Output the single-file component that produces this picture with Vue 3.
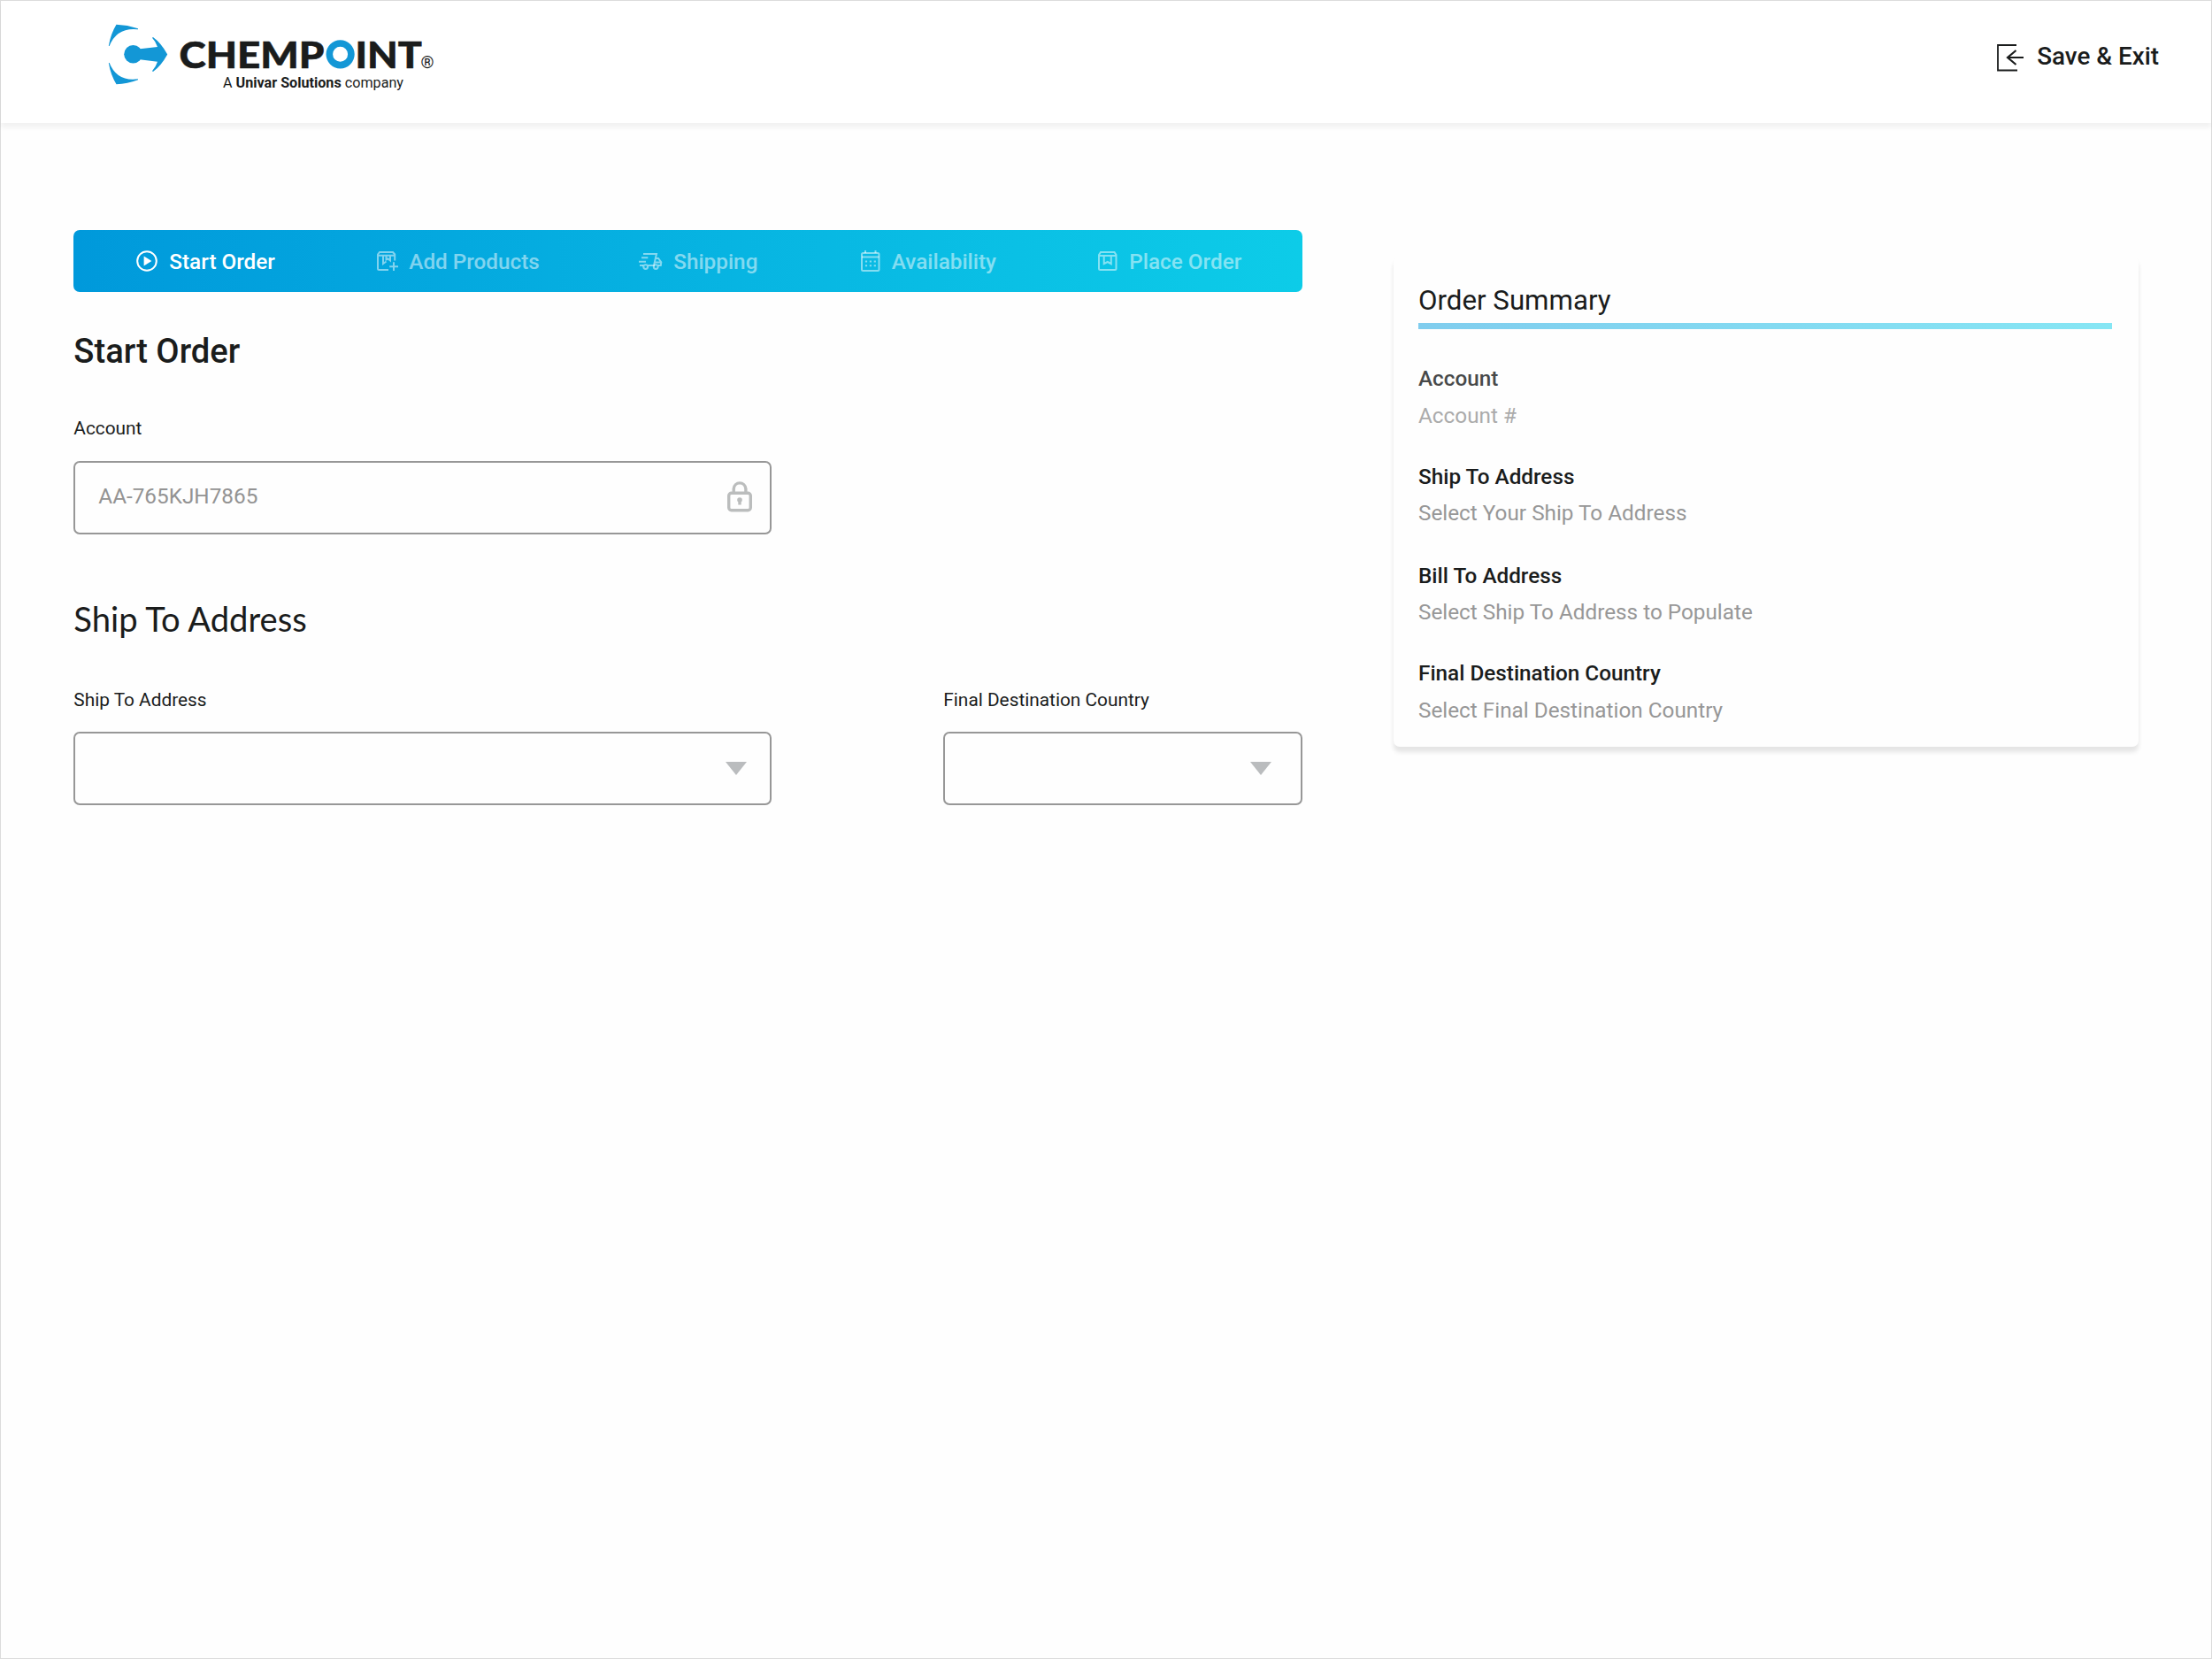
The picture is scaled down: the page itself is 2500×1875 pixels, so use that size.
<template>
  <div class="order-page">
    <header class="header">
      <svg class="logo" viewBox="120 20 380 90" role="img" aria-label="ChemPoint">
        <g fill="#1397d6">
          <path d="M131.5 27.8Q144 28.3 156 32.2L156 33.2Q132 30.5 123.6 52L122.8 52Q125 38.5 131.5 27.8Z" />
          <path d="M131.5 95.2Q144 94.7 156 90.3L156 89.3Q132 92.5 123.6 71L122.8 71Q125 84.5 131.5 95.2Z" />
          <circle cx="150.5" cy="61.3" r="10.3" />
          <path d="M156 55.6L178 53Q176 47 172 42.8L173 42Q182 48.5 189.2 61.4Q182 74.5 173 81L172 80.2Q176 76 178 69.8L156 67Z" />
        </g>
        <text class="logo-name" x="202.5" y="76.7" textLength="164" lengthAdjust="spacingAndGlyphs">CHEMP</text>
        <circle cx="384.6" cy="61.3" r="12.3" fill="none" stroke="#1397d6" stroke-width="7.6" />
        <text class="logo-name" x="401.5" y="76.7" textLength="75.5" lengthAdjust="spacingAndGlyphs">INT</text>
        <text class="logo-mark" x="475.5" y="76.5" textLength="15" lengthAdjust="spacingAndGlyphs">®</text>
        <text class="logo-sub" x="252" y="99" textLength="204" lengthAdjust="spacingAndGlyphs">A <tspan class="logo-bold">Univar Solutions</tspan> company</text>
      </svg>
      <button class="btn-exit">
        <svg class="exit-icon" viewBox="0 0 31 31">
          <path d="M22 1H1V29.5H23" stroke-width="1.8" />
          <path d="M30 15H12M21.5 7L12 15L21.5 23" stroke-width="2.2" />
        </svg>
        <span>Save &amp; Exit</span>
      </button>
    </header>

    <main class="content">
      <section class="order-form">
        <nav class="steps">
          <div v-for="step in steps" :key="step.id" class="step" :class="[step.id, { active: step.id === currentStep }]">
            <svg v-if="step.id === 'start'" class="icon-start" viewBox="0 0 24 24">
              <circle cx="12" cy="12" r="10.8" />
              <path class="solid" d="M8.6 6.4L17.4 11.9L8.6 17.5Z" />
            </svg>
            <svg v-else-if="step.id === 'products'" class="icon-products" viewBox="0 0 24 22">
              <path d="M20.2 10.5V3.5L18 1H3L1 3.5V19.5Q1 21 2.5 21H13M1 4.8H20M7 5V14L10.5 11.5M10.5 5V9.5L12.500 8.500L15 10.5V5M19 12.2V22M14.2 17.2H24" />
            </svg>
            <svg v-else-if="step.id === 'shipping'" class="icon-shipping" viewBox="0 0 27 19">
              <path d="M5 1H20L17 14H10.5M3 5.3H10.300M0 9.7H8M1 14H5M19 6H22L25.3 10.300L24.8 14H22M18 10.5H25" />
              <circle cx="7.7" cy="15.6" r="2.4" />
              <circle cx="19.2" cy="15.6" r="2.4" />
            </svg>
            <svg v-else-if="step.id === 'availability'" class="icon-availability" viewBox="0 0 22 24">
              <rect x="1" y="3" width="19.5" height="20" rx="1.5" />
              <path d="M1 7.5H20.5M5 0V3M16.5 0V3" />
              <path stroke-dasharray="2.2 2.7" d="M4.900 12.6H17M4.9 17.3H17" />
            </svg>
            <svg v-else class="icon-place" viewBox="0 0 22 22">
              <path d="M1 4L3 1H18.5L20.5 4V19.5Q20.5 21 19 21H2.5Q1 21 1 19.5ZM1 5H20.5M6.7 5V14.2L10.8 12L14.8 14.2V5" />
            </svg>
            <span>{{ step.name }}</span>
          </div>
        </nav>

        <h1>Start Order</h1>

        <div class="form-group account">
          <label>Account</label>
          <div class="field">
            <span>{{ accountNumber }}</span>
            <svg class="lock-icon" viewBox="0 0 28 36">
              <rect x="1.7" y="14.2" width="24.6" height="19.5" rx="3" />
              <path d="M7.2 14V9.5A6.9 7.5 0 0 1 20.9 9.5V14" />
              <circle class="solid" cx="14" cy="22" r="2.8" />
              <path d="M14 22V27.5" />
            </svg>
          </div>
        </div>

        <h2>Ship To Address</h2>

        <div class="form-row">
          <div class="form-group ship-to">
            <label>Ship To Address</label>
            <div class="field select">
              <svg class="arrow" viewBox="0 0 24 15"><path d="M0 0H24L12 15Z" /></svg>
            </div>
          </div>
          <div class="form-group country">
            <label>Final Destination Country</label>
            <div class="field select">
              <svg class="arrow" viewBox="0 0 24 15"><path d="M0 0H24L12 15Z" /></svg>
            </div>
          </div>
        </div>
      </section>

      <aside class="summary">
        <h3>Order Summary</h3>
        <div v-for="item in summary" :key="item.title" class="summary-item" :class="{ muted: item.muted }">
          <strong>{{ item.title }}</strong>
          <span>{{ item.value }}</span>
        </div>
      </aside>
    </main>
  </div>
</template>

<script setup>
import { ref } from 'vue'

const currentStep = ref('start')
const accountNumber = ref('AA-765KJH7865')

const steps = [
  { id: 'start', name: 'Start Order' },
  { id: 'products', name: 'Add Products' },
  { id: 'shipping', name: 'Shipping' },
  { id: 'availability', name: 'Availability' },
  { id: 'place', name: 'Place Order' }
]

const summary = ref([
  { title: 'Account', value: 'Account #', muted: true },
  { title: 'Ship To Address', value: 'Select Your Ship To Address' },
  { title: 'Bill To Address', value: 'Select Ship To Address to Populate' },
  { title: 'Final Destination Country', value: 'Select Final Destination Country' }
])
</script>

<style>
body {
  background: #fefefe;
}
</style>

<style scoped>
.order-page {
  box-sizing: border-box;
  width: 2500px;
  height: 1875px;
  border: 1px solid #dcdcdc;
  background: #fefefe;
  font-family: Roboto, sans-serif;
  color: #1a1c1c;
}

.order-page * {
  box-sizing: border-box;
}

.header {
  display: flex;
  justify-content: space-between;
  align-items: flex-start;
  height: 138px;
  padding: 19px 59px 0 119px;
  background: #fff;
  box-shadow: 0 5.5px 5.5px rgba(0, 0, 0, 0.05);
}

.logo {
  width: 380px;
  height: 90px;
}

.logo-name {
  font-family: Lato, sans-serif;
  font-size: 42.5px;
  font-weight: 900;
  fill: #1a1c1c;
  stroke: #1a1c1c;
  stroke-width: 0.6;
}

.logo-mark {
  font-size: 19px;
  fill: #1a1c1c;
}

.logo-sub {
  font-size: 16.5px;
  fill: #1a1c1c;
}

.logo-bold {
  font-weight: 700;
}

.btn-exit {
  display: flex;
  align-items: center;
  gap: 14px;
  margin-top: 26px;
  padding: 0;
  border: none;
  background: none;
  color: #1a1c1c;
  font-family: inherit;
  font-size: 27.8px;
  font-weight: 500;
  line-height: 32px;
}

.exit-icon {
  width: 31px;
  height: 31px;
  margin-top: 4px;
  fill: none;
  stroke: #1a1c1c;
}

.content {
  display: flex;
  align-items: flex-start;
  justify-content: space-between;
  padding: 121px 82px 0 82.3px;
}

.order-form {
  width: 1389px;
}

.steps {
  display: flex;
  justify-content: space-between;
  align-items: center;
  height: 70px;
  padding: 0 69px 0 71px;
  border-radius: 7px;
  background: linear-gradient(90deg, #0099db 0%, #0dcce8 100%);
}

.step {
  display: flex;
  align-items: center;
  gap: 13px;
  color: rgba(255, 255, 255, 0.5);
  font-size: 24.3px;
  font-weight: 500;
  line-height: 30px;
}

.step span {
  padding-top: 1px;
}

.step.active {
  color: #fff;
}

.step.products,
.step.shipping {
  gap: 12px;
}

.step.shipping {
  margin: 0 1px 0 -3px;
}

.step svg {
  fill: none;
  stroke: currentColor;
  stroke-width: 2;
}

.step svg .solid {
  fill: currentColor;
  stroke: none;
}

.icon-start { width: 24px; height: 24px; }
.icon-products { width: 24px; height: 22px; }
.icon-shipping { width: 27px; height: 19px; }
.icon-availability { width: 22px; height: 24px; }
.icon-place { width: 22px; height: 22px; }

h1 {
  margin: 44px 0 0;
  font-size: 38.2px;
  font-weight: 500;
  line-height: 46px;
}

h2 {
  margin: 72px 0 0;
  font-family: Lato, sans-serif;
  font-size: 38.2px;
  font-weight: 400;
  line-height: 46px;
}

.form-group label {
  display: block;
  margin-bottom: 24.6px;
  font-size: 20.83px;
  line-height: 24px;
}

.account {
  width: 788.7px;
  margin-top: 52.4px;
}

.form-row {
  display: flex;
  justify-content: space-between;
  margin-top: 56.6px;
}

.ship-to {
  width: 788.7px;
}

.country {
  width: 406px;
}

.field {
  display: flex;
  justify-content: space-between;
  align-items: center;
  height: 83px;
  padding: 0 20px 3px 26px;
  border: 2px solid #979797;
  border-radius: 7px;
  color: #939393;
  font-size: 24.3px;
}

.lock-icon {
  width: 28px;
  height: 36px;
  fill: none;
  stroke: #bbbdbd;
  stroke-width: 3.4;
}

.lock-icon .solid {
  fill: #bbbdbd;
  stroke: none;
}

.select {
  justify-content: flex-end;
  padding-bottom: 0;
}

.ship-to .select {
  padding-right: 26px;
}

.country .select {
  padding-right: 33px;
}

.arrow {
  width: 24px;
  height: 15px;
  fill: #babcbe;
}

.summary {
  width: 842px;
  height: 554px;
  margin-top: 30px;
  padding: 30px 30px 0 28px;
  border-radius: 7px;
  background: #fefefe;
  box-shadow: 0 5.5px 5.5px rgba(0, 0, 0, 0.1);
}

.summary h3 {
  margin: 0 0 41px;
  padding-bottom: 5px;
  border-bottom: 7px solid;
  border-image: linear-gradient(90deg, #80cdee, #86e6f4) 1;
  font-size: 31.25px;
  font-weight: 400;
  line-height: 40px;
}

.summary-item {
  display: flex;
  flex-direction: column;
  gap: 11.5px;
  margin-bottom: 39px;
  font-size: 24.3px;
  line-height: 30px;
}

.summary-item:nth-of-type(2) {
  margin-bottom: 40.6px;
}

.summary-item strong {
  font-weight: 500;
}

.summary-item span {
  color: #979797;
}

.summary-item.muted {
  opacity: 0.8;
}
</style>
